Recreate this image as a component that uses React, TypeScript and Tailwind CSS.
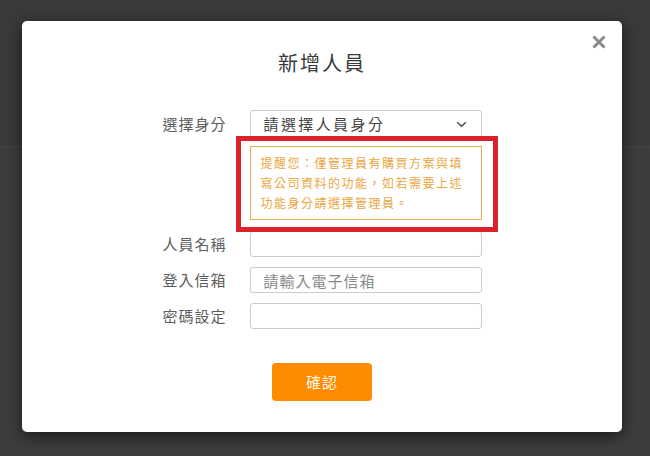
import React from 'react';

const FONT = "font-['Noto_Sans_CJK_TC','Noto_Sans_CJK_SC',sans-serif]";

const FormRow: React.FC<{ label: string; children: React.ReactNode; className?: string }> = ({ label, children, className }) => (
  <div className={`flex items-center ${className ?? ''}`}>
    <div className="w-[87px] text-[15px] tracking-[1px] text-[#5e5e5e]">{label}</div>
    {children}
  </div>
);

export default function App() {
  return (
    <div className={`relative w-[650px] h-[456px] bg-[#3d3d3d] overflow-hidden ${FONT}`}>
      <div className="h-[147px] bg-[#3a3a3a] border-b border-[#444]" />

      <div className="absolute left-[22px] top-[21px] w-[600px] h-[411px] bg-white rounded-[5px] shadow-[0_4px_16px_rgba(0,0,0,0.6)] flex flex-col items-center pt-[28px]">
        <button className="absolute right-[16px] top-[14px] w-[14px] h-[14px]">
          <svg viewBox="0 0 14 14" className="w-[14px] h-[14px]">
            <path d="M1.5 1.5 L12.5 12.5 M12.5 1.5 L1.5 12.5" stroke="#8a8a8a" strokeWidth="3" strokeLinecap="butt" />
          </svg>
        </button>

        <h2 className="text-[20px] leading-[28px] tracking-[2px] text-[#3a3a3a]">新增人員</h2>

        <div className="w-[319px] mt-[33px] flex flex-col">
          <FormRow label="選擇身分">
            <div className="w-[232px] h-[29px] border border-[#ccc] rounded-[3px] flex items-center justify-between pl-[13px] pr-[14px]">
              <span className="text-[15px] tracking-[2.4px] text-[#444]">請選擇人員身分</span>
              <svg viewBox="0 0 12 8" className="w-[11px] h-[7px]">
                <path d="M1 1.5 L6 6 L11 1.5" fill="none" stroke="#444" strokeWidth="1.5" />
              </svg>
            </div>
          </FormRow>

          <div className="flex mt-[7px]">
            <div className="w-[87px]" />
            <div className="relative w-[232px]">
              <div className="border border-[#e5b04f] px-[10px] py-[6px] text-[12px] leading-[20px] tracking-[1.5px] text-[#eaa63f]">
                提醒您：僅管理員有購買方案與填寫公司資料的功能，如若需要上述功能身分請選擇管理員。
              </div>
              <div className="absolute -left-[14px] -top-[10px] -right-[16px] -bottom-[12px] border-[5px] border-[#d9222c] pointer-events-none z-10" />
            </div>
          </div>

          <FormRow label="人員名稱" className="mt-[11px]">
            <input className="w-[232px] h-[26px] border border-[#ccc] rounded-[3px] px-[13px] outline-none" />
          </FormRow>
          <FormRow label="登入信箱" className="mt-[10px]">
            <input
              placeholder="請輸入電子信箱"
              className="w-[232px] h-[26px] border border-[#ccc] rounded-[3px] px-[13px] text-[15px] tracking-[1px] placeholder:text-[#8a8a8a] outline-none"
            />
          </FormRow>
          <FormRow label="密碼設定" className="mt-[10px]">
            <input type="password" className="w-[232px] h-[26px] border border-[#ccc] rounded-[3px] px-[13px] outline-none" />
          </FormRow>
        </div>

        <button className="mt-[34px] w-[100px] h-[38px] bg-[#ff8b00] rounded-[4px] text-[15px] tracking-[1px] text-[#fff6e6]">
          確認
        </button>
      </div>
    </div>
  );
}
